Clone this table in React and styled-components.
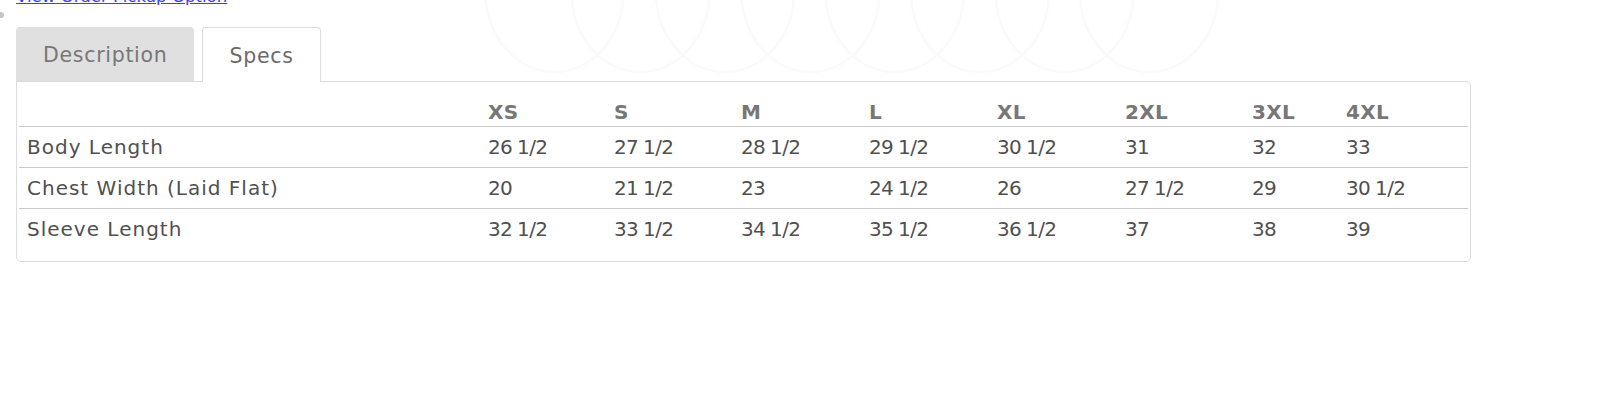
import styled, { createGlobalStyle } from "styled-components";

const GlobalStyle = createGlobalStyle`
  body {
    margin: 0;
    background: #fff;
    font-family: "DejaVu Sans", "Open Sans", sans-serif;
  }
`;

const Page = styled.div`
  padding: 0 0 0 16px;
  overflow: hidden;
  height: 404px;
`;

const Top = styled.div`
  position: relative;
  display: flow-root;
`;

const Rings = styled.svg`
  position: absolute;
  top: 0;
  left: 464px;
  z-index: 0;
`;

const PickupLink = styled.a`
  display: block;
  position: relative;
  margin-top: -13px;
  line-height: 20px;
  font-size: 16.6px;
  color: #3d3dff;
  text-decoration: underline;
  width: max-content;
`;

const Dot = styled.div`
  width: 6px;
  height: 6px;
  margin: 5px 0 0 -18px;
  border-radius: 50%;
  background: #c4c4c4;
`;

const Tabs = styled.div`
  position: relative;
  z-index: 1;
  display: flex;
  align-items: flex-start;
  gap: 8px;
  margin-top: 9px;
  margin-bottom: -1px;
`;

const Tab = styled.div`
  box-sizing: border-box;
  height: ${(p) => (p.$active ? "55px" : "54px")};
  padding: 1px 26px 0 26px;
  display: flex;
  align-items: center;
  font-size: 20.5px;
  letter-spacing: 0.7px;
  border: 1px solid ${(p) => (p.$active ? "#dcdcdc" : "#e0e0e0")};
  border-bottom: none;
  border-radius: 4px 4px 0 0;
  background: ${(p) => (p.$active ? "#fff" : "#e0e0e0")};
  color: ${(p) => (p.$active ? "#6a6a6a" : "#777")};
`;

const Panel = styled.div`
  box-sizing: border-box;
  width: 1455px;
  padding: 0 2px 12px;
  border: 1px solid #dcdcdc;
  border-radius: 0 5px 5px 5px;
`;

const SizeTable = styled.table`
  width: 100%;
  border-collapse: collapse;
  table-layout: fixed;
  font-size: 20px;
  line-height: 24px;
`;

const HeadCell = styled.th`
  height: 42px;
  padding: 0 0 2px 8px;
  vertical-align: bottom;
  text-align: left;
  font-weight: bold;
  letter-spacing: 0.3px;
  color: #777;
`;

const Row = styled.tr`
  border-bottom: 1px solid #c8c8c8;
  &:last-child {
    border-bottom: none;
  }
`;

const HeadRow = styled.tr`
  border-bottom: 1px solid #c8c8c8;
`;

const Cell = styled.td`
  height: 40px;
  padding: 0 0 0 8px;
  vertical-align: middle;
  color: #505050;
  white-space: nowrap;
  letter-spacing: ${(p) => (p.$label ? "1px" : "-0.6px")};
  word-spacing: ${(p) => (p.$label ? "0" : "-1px")};
`;

const sizes = ["XS", "S", "M", "L", "XL", "2XL", "3XL", "4XL"];
const widths = [461, 126, 127, 128, 128, 128, 127, 94, 130];

const specs = [
  ["Body Length", ["26 1/2", "27 1/2", "28 1/2", "29 1/2", "30 1/2", "31", "32", "33"]],
  ["Chest Width (Laid Flat)", ["20", "21 1/2", "23", "24 1/2", "26", "27 1/2", "29", "30 1/2"]],
  ["Sleeve Length", ["32 1/2", "33 1/2", "34 1/2", "35 1/2", "36 1/2", "37", "38", "39"]],
];

const ringCenters = [74.5, 160.5, 245, 330.5, 414.5, 500, 584.5, 669];

const App = () => {
  return (
    <Page>
      <GlobalStyle />
      <Top>
        <Rings width="745" height="80" viewBox="0 0 745 80">
          {ringCenters.map((cx) => (
            <ellipse
              key={cx}
              cx={cx}
              cy={-8}
              rx={69}
              ry={80}
              fill="none"
              stroke="#fafafa"
              strokeWidth="2.5"
            />
          ))}
        </Rings>
        <PickupLink href="#">View Order Pickup Option</PickupLink>
        <Dot />
        <Tabs>
          <Tab>Description</Tab>
          <Tab $active>Specs</Tab>
        </Tabs>
      </Top>
      <Panel>
        <SizeTable>
          <colgroup>
            {widths.map((w, i) => (
              <col key={i} style={{ width: w }} />
            ))}
          </colgroup>
          <thead>
            <HeadRow>
              <HeadCell />
              {sizes.map((s) => (
                <HeadCell key={s}>{s}</HeadCell>
              ))}
            </HeadRow>
          </thead>
          <tbody>
            {specs.map(([label, values]) => (
              <Row key={label}>
                <Cell $label>{label}</Cell>
                {values.map((v, i) => (
                  <Cell key={i}>{v}</Cell>
                ))}
              </Row>
            ))}
          </tbody>
        </SizeTable>
      </Panel>
    </Page>
  );
};

export default App;
